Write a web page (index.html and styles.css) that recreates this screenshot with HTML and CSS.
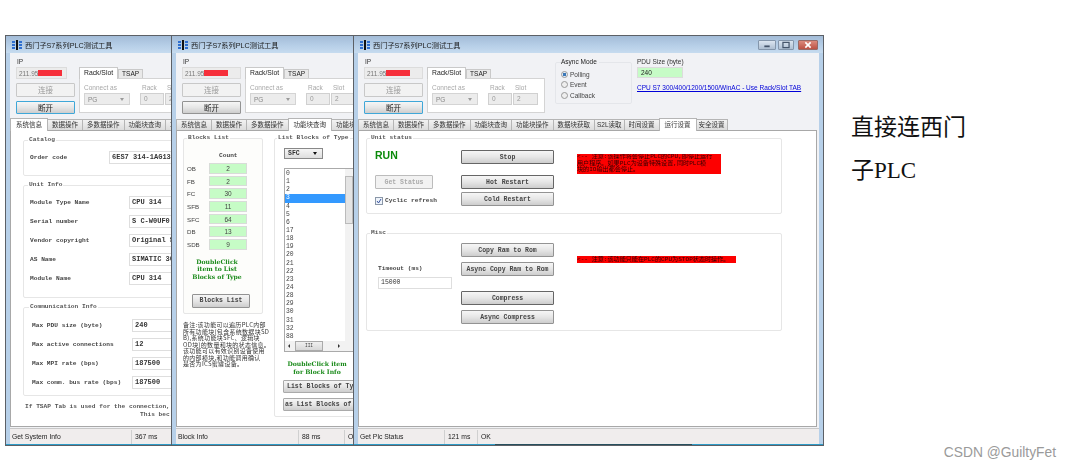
FILE: index.html
```html
<!DOCTYPE html>
<html lang="zh">
<head>
    <meta charset="UTF-8">
    <title>西门子S7系列PLC测试工具</title>
    <link rel="stylesheet" href="styles.css">
</head>
<body>
    <div class="page">
        <div class="desktop">

            <!-- window 1: system info -->
            <section class="window win-sys">
                <div class="titlebar">
                    <svg class="app-icon" viewBox="0 0 10 10"><rect x="0" y="1" width="3" height="2" fill="#2f6fd0"/><rect x="0" y="4" width="3" height="2" fill="#2f6fd0"/><rect x="0" y="7" width="3" height="2" fill="#2f6fd0"/><rect x="4" y="0" width="2" height="10" fill="#111"/><rect x="7" y="1" width="3" height="2" fill="#2f6fd0"/><rect x="7" y="4" width="3" height="2" fill="#2f6fd0"/><rect x="7" y="7" width="3" height="2" fill="#2f6fd0"/></svg>
                    <span>西门子S7系列PLC测试工具</span>
                </div>
                <div class="client">
                    <div class="top-panel">
                        <div class="conn">
                            <label class="cap">IP</label>
                            <div class="ip-box ip-short">211.95<span class="redact"></span></div>
                            <button class="btn btn-off">连接</button>
                            <button class="btn btn-focus">断开</button>
                        </div>
                        <div class="rack">
                            <div class="rack-tabs"><span class="rack-tab on">Rack/Slot</span><span class="rack-tab">TSAP</span></div>
                            <div class="rack-body">
                                <div class="rack-col col-conn"><span class="cap-off">Connect as</span><div class="combo">PG<i></i></div></div>
                                <div class="rack-col col-rack"><span class="cap-off">Rack</span><div class="num">0</div></div>
                                <div class="rack-col col-slot"><span class="cap-off">Slot</span><div class="num">2</div></div>
                            </div>
                        </div>
                    </div>
                    <div class="tabs">
                        <span class="tab on">系统信息</span><span class="tab">数据操作</span><span class="tab">多数据操作</span><span class="tab">功能块查询</span><span class="tab">功能块操作</span>
                    </div>
                    <div class="tab-page sys-page">
                        <fieldset class="group">
                            <legend>Catalog</legend>
                            <div class="info-rows catalog-rows">
                                <span>Order code</span><div class="field">6ES7 314-1AG13-0AB0</div>
                            </div>
                        </fieldset>
                        <fieldset class="group">
                            <legend>Unit Info</legend>
                            <div class="info-rows unit-rows">
                                <span>Module Type Name</span><div class="field">CPU 314</div>
                                <span>Serial number</span><div class="field">S C-W0UF0</div>
                                <span>Vendor copyright</span><div class="field">Original Siemens</div>
                                <span>AS Name</span><div class="field">SIMATIC 300</div>
                                <span>Module Name</span><div class="field">CPU 314</div>
                            </div>
                        </fieldset>
                        <fieldset class="group">
                            <legend>Communication Info</legend>
                            <div class="info-rows comm-rows">
                                <span>Max PDU size (byte)</span><div class="field">240</div>
                                <span>Max active connections</span><div class="field">12</div>
                                <span>Max MPI rate (bps)</span><div class="field">187500</div>
                                <span>Max comm. bus rate (bps)</span><div class="field">187500</div>
                            </div>
                        </fieldset>
                        <p class="sys-note">If TSAP Tab is used for the connection, the<br><span class="sys-note-2">This bec</span></p>
                    </div>
                    <div class="status">
                        <span class="st-main st-sys">Get System Info</span><span class="st-ms">367 ms</span>
                    </div>
                </div>
                <div class="frame-bottom"></div>
            </section>

            <!-- window 2: block info -->
            <section class="window win-block">
                <div class="titlebar">
                    <svg class="app-icon" viewBox="0 0 10 10"><rect x="0" y="1" width="3" height="2" fill="#2f6fd0"/><rect x="0" y="4" width="3" height="2" fill="#2f6fd0"/><rect x="0" y="7" width="3" height="2" fill="#2f6fd0"/><rect x="4" y="0" width="2" height="10" fill="#111"/><rect x="7" y="1" width="3" height="2" fill="#2f6fd0"/><rect x="7" y="4" width="3" height="2" fill="#2f6fd0"/><rect x="7" y="7" width="3" height="2" fill="#2f6fd0"/></svg>
                    <span>西门子S7系列PLC测试工具</span>
                </div>
                <div class="client">
                    <div class="top-panel">
                        <div class="conn">
                            <label class="cap">IP</label>
                            <div class="ip-box">211.95<span class="redact"></span></div>
                            <button class="btn btn-off">连接</button>
                            <button class="btn">断开</button>
                        </div>
                        <div class="rack">
                            <div class="rack-tabs"><span class="rack-tab on">Rack/Slot</span><span class="rack-tab">TSAP</span></div>
                            <div class="rack-body">
                                <div class="rack-col col-conn"><span class="cap-off">Connect as</span><div class="combo">PG<i></i></div></div>
                                <div class="rack-col col-rack"><span class="cap-off">Rack</span><div class="num">0</div></div>
                                <div class="rack-col col-slot"><span class="cap-off">Slot</span><div class="num">2</div></div>
                            </div>
                        </div>
                    </div>
                    <div class="tabs">
                        <span class="tab">系统信息</span><span class="tab">数据操作</span><span class="tab">多数据操作</span><span class="tab on">功能块查询</span><span class="tab">功能块操作</span>
                    </div>
                    <div class="tab-page block-page">
                        <div class="block-left">
                            <fieldset class="group blocks-group">
                                <legend>Blocks List</legend>
                                <div class="count-head">Count</div>
                                <div class="count-rows">
                                    <span>OB</span><div class="count">2</div>
                                    <span>FB</span><div class="count">2</div>
                                    <span>FC</span><div class="count">30</div>
                                    <span>SFB</span><div class="count">11</div>
                                    <span>SFC</span><div class="count">64</div>
                                    <span>DB</span><div class="count">13</div>
                                    <span>SDB</span><div class="count">9</div>
                                </div>
                                <p class="hint hint-left">DoubleClick<br>item to List<br>Blocks of Type</p>
                                <button class="btn btn-mono btn-blocks">Blocks List</button>
                            </fieldset>
                            <p class="block-note">备注:该功能可以遍历PLC内部<br>所有功能块(包含系统数据块SD<br>B),系统功能块SFC、逻辑块<br>OD块)的数量和块的状态信息。<br>该功能可以有效识别设备使用<br>的内部模块,和功能调用确认<br>是否为ICS蜜罐设备。</p>
                        </div>
                        <fieldset class="group type-group">
                            <legend>List Blocks of Type</legend>
                            <div class="combo combo-dark">SFC<i></i></div>
                            <div class="listbox">
                                <div class="list-main">
                                    <ul class="list-items">
                                        <li>0</li><li>1</li><li>2</li><li class="sel">3</li><li>4</li><li>5</li><li>6</li><li>17</li><li>18</li><li>19</li><li>20</li><li>21</li><li>22</li><li>23</li><li>24</li><li>28</li><li>29</li><li>30</li><li>31</li><li>32</li><li>88</li>
                                    </ul>
                                    <div class="vscroll"><i class="up"></i><b></b><i class="down"></i></div>
                                </div>
                                <div class="hscroll"><i class="left"></i><b>III</b><i class="right"></i></div>
                            </div>
                            <p class="hint hint-right">DoubleClick item<br>for Block Info</p>
                            <button class="btn btn-mono btn-type">List Blocks of Type</button>
                            <button class="btn btn-mono btn-type btn-type-2">as List Blocks of Type</button>
                        </fieldset>
                    </div>
                    <div class="status">
                        <span class="st-main st-block">Block Info</span><span class="st-ms st-ms-block">88 ms</span><span class="st-ok">OK</span>
                    </div>
                </div>
                <div class="frame-bottom"></div>
            </section>

            <!-- window 3: run settings, on top -->
            <section class="window win-run">
                <div class="titlebar">
                    <svg class="app-icon" viewBox="0 0 10 10"><rect x="0" y="1" width="3" height="2" fill="#2f6fd0"/><rect x="0" y="4" width="3" height="2" fill="#2f6fd0"/><rect x="0" y="7" width="3" height="2" fill="#2f6fd0"/><rect x="4" y="0" width="2" height="10" fill="#111"/><rect x="7" y="1" width="3" height="2" fill="#2f6fd0"/><rect x="7" y="4" width="3" height="2" fill="#2f6fd0"/><rect x="7" y="7" width="3" height="2" fill="#2f6fd0"/></svg>
                    <span>西门子S7系列PLC测试工具</span>
                    <div class="win-btns">
                        <span class="win-btn"><svg viewBox="0 0 18 9"><rect x="6" y="5" width="6" height="2" fill="#44546a"/></svg></span>
                        <span class="win-btn win-max"><svg viewBox="0 0 16 9"><rect x="4.5" y="1.5" width="7" height="6" fill="none" stroke="#44546a" stroke-width="1.4"/></svg></span>
                        <span class="win-btn win-close"><svg viewBox="0 0 20 9"><path d="M7 1.5l6 6M13 1.5l-6 6" stroke="#fff" stroke-width="1.8"/></svg></span>
                    </div>
                </div>
                <div class="client">
                    <div class="top-panel">
                        <div class="conn">
                            <label class="cap">IP</label>
                            <div class="ip-box">211.95<span class="redact"></span></div>
                            <button class="btn btn-off">连接</button>
                            <button class="btn btn-focus">断开</button>
                        </div>
                        <div class="rack">
                            <div class="rack-tabs"><span class="rack-tab on">Rack/Slot</span><span class="rack-tab">TSAP</span></div>
                            <div class="rack-body">
                                <div class="rack-col col-conn"><span class="cap-off">Connect as</span><div class="combo">PG<i></i></div></div>
                                <div class="rack-col col-rack"><span class="cap-off">Rack</span><div class="num">0</div></div>
                                <div class="rack-col col-slot"><span class="cap-off">Slot</span><div class="num">2</div></div>
                            </div>
                        </div>
                        <fieldset class="async">
                            <legend>Async Mode</legend>
                            <div class="radio-row"><span class="radio checked"></span>Polling</div>
                            <div class="radio-row"><span class="radio"></span>Event</div>
                            <div class="radio-row"><span class="radio"></span>Callback</div>
                        </fieldset>
                        <div class="pdu">
                            <label class="cap">PDU Size (byte)</label>
                            <div class="pdu-box">240</div>
                            <a class="cpu-link" href="#">CPU S7 300/400/1200/1500/WinAC - Use Rack/Slot TAB</a>
                        </div>
                    </div>
                    <div class="tabs">
                        <span class="tab">系统信息</span><span class="tab">数据操作</span><span class="tab">多数据操作</span><span class="tab">功能块查询</span><span class="tab">功能块操作</span><span class="tab">数据块获取</span><span class="tab tab-narrow">S2L读取</span><span class="tab">时间设置</span><span class="tab on">运行设置</span><span class="tab tab-last">安全设置</span>
                    </div>
                    <div class="tab-page run-page">
                        <fieldset class="group run-group unit-status">
                            <legend>Unit status</legend>
                            <div class="run-left">
                                <div class="run-state">RUN</div>
                                <button class="btn btn-mono btn-status">Get Status</button>
                                <div class="cyclic">
                                    <svg viewBox="0 0 8 8"><rect x=".5" y=".5" width="7" height="7" fill="#eef3fa" stroke="#8a97a8"/><path d="M2 4l1.5 2L6 2" fill="none" stroke="#3a55a0" stroke-width="1"/></svg>
                                    Cyclic refresh
                                </div>
                            </div>
                            <div class="run-mid">
                                <button class="btn btn-mono btn-dark btn-stop">Stop</button>
                                <button class="btn btn-mono btn-dark">Hot Restart</button>
                                <button class="btn btn-mono">Cold Restart</button>
                            </div>
                            <p class="warn warn-stop">&lt;-- 注意:该操作将会停止PLC的CPU,即停止运行<br>用户程序。如果PLC为设备特殊设置,同时PLC模<br>块的IO输出都会停止。</p>
                        </fieldset>
                        <fieldset class="group run-group misc">
                            <legend>Misc</legend>
                            <div class="run-left misc-left">
                                <label class="misc-cap">Timeout (ms)</label>
                                <div class="field timeout">15000</div>
                            </div>
                            <div class="run-mid misc-mid">
                                <button class="btn btn-mono">Copy Ram to Rom</button>
                                <button class="btn btn-mono">Async Copy Ram to Rom</button>
                                <button class="btn btn-mono btn-dark btn-gap">Compress</button>
                                <button class="btn btn-mono">Async Compress</button>
                            </div>
                            <p class="warn warn-misc">&lt;-- 注意:该功能只能在PLC的CPU为STOP状态时操作。</p>
                        </fieldset>
                    </div>
                    <div class="status">
                        <span class="st-main st-run">Get Plc Status</span><span class="st-ms st-ms-run">121 ms</span><span class="st-ok">OK</span>
                    </div>
                </div>
                <div class="frame-bottom"></div>
            </section>
        </div>

        <p class="caption">直接连西门子PLC</p>
    </div>
    <div class="watermark">CSDN @GuiltyFet</div>
</body>
</html>
```

FILE: styles.css
```css
* {
    box-sizing: border-box;
    margin: 0;
    padding: 0;
}

html, body {
    height: 469px;
    overflow: hidden;
    background: #fff;
}

body {
    position: relative;
    font-family: "Liberation Sans", "Noto Sans CJK SC", sans-serif;
    color: #222;
}

.page {
    display: flex;
}

.desktop {
    position: relative;
    width: 824px;
    height: 469px;
    flex: none;
    filter: blur(0.4px);
}

.caption {
    width: 125px;
    margin: 106px 0 0 27px;
    font-family: "Liberation Serif", "Noto Sans CJK SC", serif;
    font-size: 23px;
    line-height: 43px;
    color: #111;
}

.watermark {
    position: absolute;
    right: 14px;
    bottom: 9px;
    font-size: 13.8px;
    color: #9a9a9a;
}

/* windows */
.window {
    position: absolute;
    top: 35px;
    height: 411px;
    display: flex;
    flex-direction: column;
    overflow: hidden;
    padding: 0 4px;
    background: #b7d0e9;
    border: 1px solid #5c6066;
}

.win-sys { left: 5px; width: 176px; }
.win-block { left: 171px; width: 192px; }
.win-run { left: 353px; width: 471px; }

.titlebar {
    height: 17px;
    flex: none;
    display: flex;
    align-items: center;
    gap: 3px;
    margin: 0 -4px;
    padding: 0 1px 0 6px;
    background: linear-gradient(#a3bcd8, #b8d0e8 60%, #c6dbef);
    font-size: 7.2px;
    color: #1a1a1a;
    white-space: nowrap;
}

.app-icon {
    width: 10px;
    height: 10px;
    flex: none;
}

.win-btns {
    display: flex;
    gap: 2px;
    margin-left: auto;
    margin-right: 4px;
}

.win-btn {
    width: 18px;
    height: 10px;
    display: flex;
    background: linear-gradient(#dbe5f0, #aebfd2);
    border: 1px solid #8496ab;
    border-radius: 1px;
}

.win-btn svg {
    width: 100%;
    height: 100%;
}

.win-max {
    width: 16px;
    margin-right: 2px;
}

.win-close {
    width: 20px;
    background: linear-gradient(#dc8a7c, #bc5244);
    border-color: #966a66;
}

.client {
    flex: 1;
    min-height: 0;
    display: flex;
    flex-direction: column;
    background: #f1f2f5;
}

.frame-bottom {
    height: 1px;
    flex: none;
    margin: 0 -4px;
    background: #2e9cc8;
}

.win-run .frame-bottom {
    background: linear-gradient(90deg, #2e9cc8 30%, #27505e 30%, #27505e 72%, #2e9cc8 72%);
}

/* top panel */
.top-panel {
    height: 66px;
    flex: none;
    display: flex;
    padding-top: 5px;
}

.conn {
    width: 59px;
    margin: 0 4px 0 6px;
    flex: none;
    display: flex;
    flex-direction: column;
    gap: 4px;
}

.cap {
    display: block;
    height: 8px;
    margin-bottom: 1px;
    font-size: 6.5px;
    line-height: 8px;
    color: #333;
}

.conn .cap {
    margin-bottom: -3px;
    padding-left: 1px;
}

.ip-box {
    height: 12px;
    padding-left: 2px;
    display: flex;
    align-items: center;
    background: #ececec;
    border: 1px solid #dcdcdc;
    font-size: 6.5px;
    color: #777;
}

.ip-short {
    width: 51px;
}

.redact {
    width: 24px;
    height: 6px;
    background: #f62f3a;
}

.btn {
    height: 13.5px;
    flex: none;
    background: linear-gradient(#f6f6f6, #e6e6e6 50%, #cdcdcd);
    border: 1px solid #939393;
    border-radius: 1px;
    font-family: "Liberation Sans", "Noto Sans CJK SC", sans-serif;
    font-size: 7.5px;
    color: #222;
}

.btn-off {
    background: #f2f2f2;
    border-color: #c8c8c8;
    color: #999;
}

.btn-focus {
    border-color: #3fa7d8;
}

.btn-mono {
    font-family: "Liberation Mono", monospace;
    font-size: 6.5px;
    font-weight: bold;
    color: #444;
}

.btn-dark {
    border-color: #666;
}

.rack {
    width: 118px;
    flex: none;
    padding-top: 9px;
}

.rack-tabs {
    display: flex;
    align-items: flex-end;
    height: 11px;
}

.rack-tab {
    height: 9px;
    padding: 0 3px;
    background: #e9e9e9;
    border: 1px solid #c9c9c9;
    border-bottom: 0;
    font-size: 6.5px;
    line-height: 8px;
    color: #222;
}

.rack-tab.on {
    height: 12px;
    margin-bottom: -1px;
    padding: 0 4px;
    background: #fff;
    line-height: 10px;
    position: relative;
    font-size: 6.8px;
}

.rack-body {
    height: 35px;
    display: flex;
    padding: 5px 0 0 4px;
    background: #fff;
    border: 1px solid #d4d4d4;
}

.rack-col {
    display: flex;
    flex-direction: column;
    gap: 1px;
}

.col-conn { width: 46px; margin-right: 10px; }
.col-rack { width: 24px; margin-right: 1px; }
.col-slot { width: 25px; }

.cap-off {
    height: 8px;
    font-size: 6.5px;
    line-height: 8px;
    color: #a8a8a8;
}

.col-rack .cap-off,
.col-slot .cap-off {
    padding-left: 2px;
}

.combo {
    height: 12px;
    display: flex;
    align-items: center;
    justify-content: space-between;
    padding: 0 5px 0 3px;
    background: #ececec;
    border: 1px solid #d4d4d4;
    font-size: 6.5px;
    color: #888;
}

.combo i {
    border: 2px solid transparent;
    border-top: 3px solid #9a9a9a;
    border-bottom: 0;
}

.num {
    height: 12px;
    padding-left: 3px;
    background: #ececec;
    border: 1px solid #d0d0d0;
    font-size: 6.5px;
    line-height: 10px;
    color: #999;
}

.async {
    width: 77px;
    height: 46px;
    flex: none;
    margin: 0 0 0 10px;
    padding: 3px 0 0 5px;
    border: 1px solid #e4e6ea;
    border-radius: 2px;
    font-size: 6.5px;
}

.async legend {
    font-size: 6.5px;
    line-height: 8px;
    padding-right: 2px;
    margin-left: 0;
}

.radio-row {
    height: 10.5px;
    display: flex;
    align-items: center;
    gap: 2px;
    color: #444;
}

.radio {
    width: 7px;
    height: 7px;
    border: 1px solid #999;
    border-radius: 50%;
    background: #eee;
}

.radio.checked {
    background: radial-gradient(#3b78b8 45%, #e4ecf4 50%);
}

.pdu {
    margin-left: 5px;
    flex: 1;
    display: flex;
    flex-direction: column;
}

.pdu-box {
    width: 46px;
    height: 11px;
    margin-bottom: 5px;
    padding-left: 3px;
    background: #c6fcc6;
    border: 1px solid #dcdcdc;
    font-size: 6.5px;
    line-height: 9px;
}

.cpu-link {
    font-size: 6.5px;
    line-height: 10px;
    color: #0000d8;
    white-space: nowrap;
}

/* tabs */
.tabs {
    height: 11px;
    flex: none;
    display: flex;
    align-items: flex-end;
    white-space: nowrap;
}

.tab {
    height: 11px;
    flex: none;
    padding: 0 4px;
    background: linear-gradient(#f2f2f2, #dcdcdc);
    border: 1px solid #b5b5b5;
    border-bottom: 0;
    margin-right: -1px;
    font-size: 6.5px;
    line-height: 9px;
    color: #333;
}

.tab.on {
    height: 13px;
    margin-bottom: -1px;
    padding: 0 5px;
    background: #fff;
    position: relative;
    line-height: 11px;
}

.tab-narrow {
    padding: 0 2px;
}

.tab-last {
    padding: 0 2px;
}

.tab-page {
    height: 297px;
    flex: none;
    overflow: hidden;
    margin-bottom: 1px;
    background: #fff;
    border: 1px solid #a8a8a8;
}

.win-run .tab-page {
    width: 459px;
}

/* group boxes */
.group {
    border: 1px solid #e6e6e6;
    border-radius: 2px;
    font-family: "Liberation Mono", "Noto Sans CJK SC", monospace;
    font-size: 6.2px;
    color: #444;
}

.group legend {
    padding: 0 1px;
    font-size: 6.2px;
    font-weight: bold;
    line-height: 8px;
    color: #555;
    white-space: nowrap;
}

.field {
    height: 13px;
    padding-left: 2px;
    overflow: hidden;
    background: #fff;
    border: 1px solid #dedede;
    font-family: "Liberation Mono", monospace;
    font-size: 7px;
    line-height: 11px;
    white-space: nowrap;
    color: #333;
}

/* system info page */
.sys-page {
    padding: 5px 0 0 12px;
}

.sys-page .group {
    width: 180px;
    margin-bottom: 5px;
    padding: 7px 0 11px 6px;
}

.sys-page .group legend {
    margin-left: -2px;
}

.info-rows {
    display: grid;
    row-gap: 6px;
    align-items: center;
    font-weight: bold;
    white-space: nowrap;
}

.catalog-rows { grid-template-columns: 79px 70px; }
.unit-rows { grid-template-columns: 99px 50px; }
.comm-rows { grid-template-columns: 100px 50px; }

.sys-page .group:nth-child(2) { padding-bottom: 12px; }
.sys-page .group:nth-child(3) { padding: 8px 0 6px 8px; margin-bottom: 7px; }
.sys-page .group:nth-child(3) legend { margin-left: -3px; }

.sys-note {
    margin-left: 2px;
    font-family: "Liberation Mono", monospace;
    font-size: 6.2px;
    font-weight: bold;
    line-height: 8px;
    color: #555;
    white-space: nowrap;
}

.sys-note-2 {
    margin-left: 115px;
}

/* block info page */
.block-page {
    display: flex;
    padding: 3px 0 0 6px;
}

.block-left {
    width: 91px;
    flex: none;
}

.blocks-group {
    width: 80px;
    height: 180px;
    padding: 0 3px;
    background: #fdfdfb;
}

.blocks-group legend {
    margin-left: 0;
}

.count-head {
    margin: 10px 0 3px 32px;
    font-weight: bold;
    line-height: 8px;
}

.count-rows {
    display: grid;
    grid-template-columns: 22px 38px;
    grid-auto-rows: 10.7px;
    row-gap: 2px;
    align-items: center;
    font-family: "Liberation Sans", sans-serif;
}

.count {
    height: 100%;
    background: #c6fcc6;
    border: 1px solid #d8dcd8;
    font-size: 6.5px;
    line-height: 9px;
    text-align: center;
}

.hint {
    font-family: "DejaVu Serif", "Liberation Serif", serif;
    font-size: 6.1px;
    font-weight: bold;
    line-height: 7.6px;
    text-align: center;
    color: #1a8a1a;
    white-space: nowrap;
}

.hint-left {
    margin: 8px 12px 0 0;
}

.btn-blocks {
    width: 58px;
    height: 14px;
    margin: 13px 0 0 5px;
    display: block;
}

.block-note {
    margin-top: 8px;
    font-family: "Noto Sans CJK SC", sans-serif;
    font-size: 6px;
    letter-spacing: 0.3px;
    line-height: 6.5px;
    white-space: nowrap;
    color: #333;
}

.type-group {
    width: 160px;
    height: 283px;
    flex: none;
    padding: 0 0 0 9px;
    margin-left: 0;
}

.type-group legend {
    margin-left: -7px;
}

.combo-dark {
    width: 39px;
    height: 11px;
    margin-top: 6px;
    background: linear-gradient(#f5f5f5, #dedede);
    border-color: #888;
    font-family: "Liberation Mono", monospace;
    font-weight: bold;
    color: #333;
}

.combo-dark i {
    border-top-color: #111;
}

.listbox {
    width: 70px;
    height: 184px;
    margin-top: 9px;
    display: flex;
    flex-direction: column;
    background: #fff;
    border: 1px solid #aaa;
}

.list-main {
    flex: 1;
    min-height: 0;
    display: flex;
}

.list-items {
    flex: 1;
    list-style: none;
    overflow: hidden;
    padding-top: 1px;
    font-size: 6.4px;
    font-weight: normal;
}

.list-items li {
    height: 8.15px;
    padding-left: 1px;
    line-height: 8px;
}

.list-items .sel {
    background: #3399ff;
    color: #fff;
}

.vscroll {
    width: 8px;
    flex: none;
    display: flex;
    flex-direction: column;
    align-items: center;
    background: #f2f2f2;
}

.vscroll i {
    height: 7px;
    flex: none;
}

.vscroll b {
    width: 100%;
    height: 48px;
    background: #e4e4e4;
    border: 1px solid #bbb;
}

.vscroll .down {
    margin-top: auto;
}

.hscroll {
    height: 10px;
    flex: none;
    display: flex;
    align-items: center;
    padding-right: 8px;
    background: #f2f2f2;
}

.hscroll i {
    flex: none;
    margin: 0 5px 0 3px;
    border: 2px solid transparent;
}

.hscroll .left { border-right: 2px solid #333; border-left: 0; }
.hscroll .right { border-left: 2px solid #333; border-right: 0; margin-left: auto; }

.hscroll b {
    width: 28px;
    height: 100%;
    background: linear-gradient(#f0f0f0, #d8d8d8);
    border: 1px solid #aaa;
    font-size: 4.5px;
    font-weight: normal;
    line-height: 8px;
    text-align: center;
}

.hint-right {
    width: 66px;
    margin: 8px 0 0 0;
}

.btn-type {
    width: 100px;
    height: 13px;
    margin-top: 5px;
    margin-left: -1px;
    padding-left: 3px;
    display: block;
    text-align: left;
    white-space: nowrap;
    overflow: hidden;
    border-color: #aaa;
}

.btn-type-2 {
    margin-top: 5px;
    padding-left: 1px;
}

/* run settings page */
.run-page {
    padding: 3px 0 0 7px;
}

.run-group {
    width: 416px;
    display: flex;
    padding: 0 0 0 8px;
}

.run-group legend {
    margin-left: -5px;
}

.unit-status {
    height: 80px;
    margin-bottom: 15px;
    padding-top: 8px;
}

.misc {
    height: 102px;
    padding-top: 6px;
}

.run-left {
    width: 86px;
    flex: none;
    display: flex;
    flex-direction: column;
}

.run-mid {
    width: 93px;
    flex: none;
    display: flex;
    flex-direction: column;
}

.run-mid .btn {
    height: 14px;
    margin-bottom: 3px;
}

.run-mid .btn-stop {
    margin-bottom: 11px;
}

.misc-mid .btn {
    margin-bottom: 5px;
}

.misc-mid .btn-gap {
    margin-top: 10px;
}

.run-state {
    height: 11px;
    margin-bottom: 14px;
    font-family: "Liberation Sans", sans-serif;
    font-size: 10.5px;
    font-weight: bold;
    line-height: 11px;
    color: #0a8a0a;
}

.btn-status {
    width: 58px;
    height: 14px;
    background: #f2f2f2;
    border-color: #bcbcbc;
    color: #aaa;
}

.cyclic {
    height: 9px;
    margin-top: 7px;
    display: flex;
    align-items: center;
    gap: 2px;
    font-weight: bold;
    white-space: nowrap;
}

.cyclic svg {
    width: 8px;
    height: 8px;
}

.misc-left {
    padding: 22px 0 0 3px;
}

.misc-cap {
    height: 8px;
    margin-bottom: 4px;
    font-weight: bold;
    line-height: 8px;
}

.timeout {
    width: 74px;
    height: 12px;
    line-height: 10px;
    font-size: 6.5px;
}

.warn {
    margin-left: 23px;
    background: #fd0000;
    font-family: "Liberation Mono", "Noto Sans CJK SC", monospace;
    font-size: 6.1px;
    color: #300;
    white-space: nowrap;
}

.warn-stop {
    width: 144px;
    height: 20px;
    margin-top: 4px;
    line-height: 6.7px;
    overflow: hidden;
}

.warn-misc {
    width: 159px;
    height: 7px;
    margin-top: 13px;
    line-height: 7px;
    overflow: hidden;
}

/* status bar */
.status {
    height: 16px;
    flex: none;
    display: flex;
    align-items: center;
    background: #f0eded;
    border-top: 1px solid #c8c8c8;
    font-size: 6.8px;
    white-space: nowrap;
    color: #222;
}

.st-main { padding-left: 2px; }
.st-sys { width: 121px; }
.st-block { width: 122px; }
.st-run { width: 86px; }

.st-ms {
    border-left: 1px solid #d0d0d0;
    padding-left: 3px;
    line-height: 14px;
}

.st-ms-block { width: 46px; }
.st-ms-run { width: 33px; }

.st-ok {
    border-left: 1px solid #d0d0d0;
    padding-left: 3px;
    line-height: 14px;
}
```
